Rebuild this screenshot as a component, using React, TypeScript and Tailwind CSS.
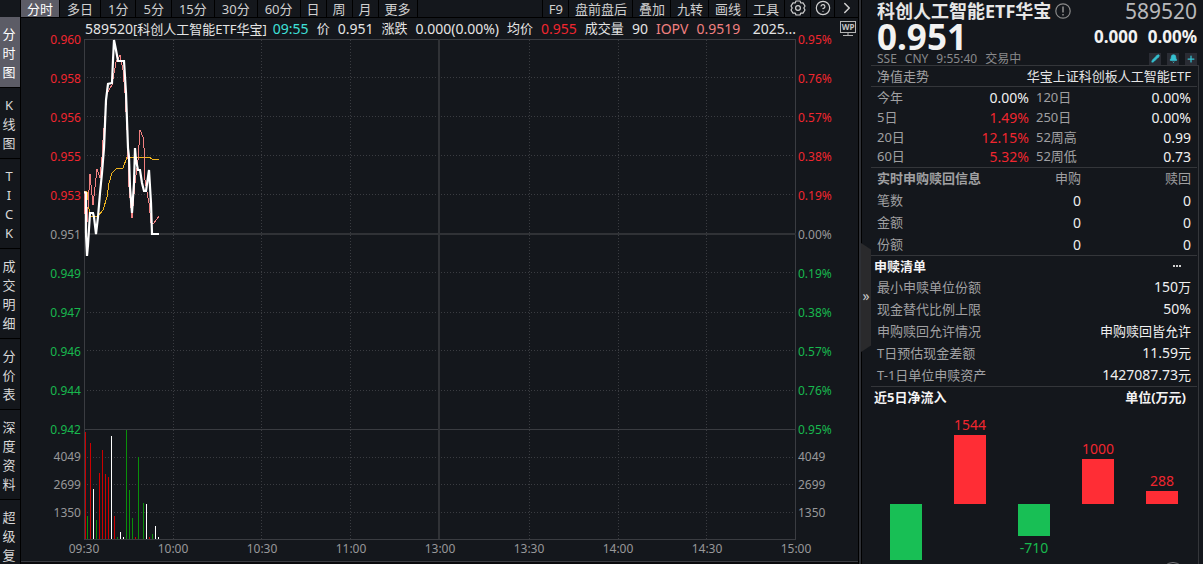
import { Bell, ChevronRight, CircleHelp, Pencil, Plus } from "lucide-react";

const SIDE_TABS = ["分时图", "K线图", "TICK", "成交明细", "分价表", "深度资料", "超级复盘"];

const PERIODS = ["分时", "多日", "1分", "5分", "15分", "30分", "60分", "日", "周", "月", "更多"];
const TOOLS = ["F9", "盘前盘后", "叠加", "九转", "画线", "工具"];

const PRICES = ["0.960", "0.958", "0.956", "0.955", "0.953", "0.951", "0.949", "0.947", "0.946", "0.944", "0.942"];
const PERCENTS = ["0.95%", "0.76%", "0.57%", "0.38%", "0.19%", "0.00%", "0.19%", "0.38%", "0.57%", "0.76%", "0.95%"];
const VOLUMES = ["4049", "2699", "1350"];
const TIMES = ["09:30", "10:00", "10:30", "11:00", "13:00", "13:30", "14:00", "14:30", "15:00"];

const QUOTE = [
  { text: "09:55", cls: "text-[14px] text-[#3fe0d8]" },
  { text: "价", cls: "text-[13px]" },
  { text: "0.951", cls: "text-[14px]" },
  { text: "涨跌", cls: "text-[13px]" },
  { text: "0.000(0.00%)", cls: "text-[14px]" },
  { text: "均价", cls: "text-[13px]" },
  { text: "0.955", cls: "text-[14px] text-[#f0262f]" },
  { text: "成交量", cls: "text-[13px]" },
  { text: "90", cls: "text-[14px]" },
  { text: "IOPV", cls: "text-[14px] text-[#f08080]" },
  { text: "0.9519", cls: "text-[14px] text-[#f08080]" },
];

const RED = "#cc0000";
const GREEN = "#0a8f0a";
const WHITE = "#ffffff";

// x, top, colour
const VOLUME_BARS: [number, number, string][] = [
  [1, 393, RED], [3, 477, GREEN], [6, 404, RED], [9, 450, WHITE], [12, 481, GREEN],
  [15, 434, RED], [18, 411, RED], [21, 435, RED], [24, 438, RED], [27, 397, WHITE],
  [30, 477, RED], [33, 498, GREEN], [36, 493, WHITE], [39, 498, WHITE], [42, 391, GREEN],
  [45, 451, GREEN], [48, 479, GREEN], [51, 498, RED], [54, 418, GREEN], [59, 464, GREEN],
  [62, 465, WHITE], [65, 498, RED], [68, 495, GREEN], [71, 487, WHITE], [74, 498, WHITE],
];

const PRICE_LINE =
  "0,153 2,154 2,195 3,217 4,206 6,174 9,174 10,178 12,195 14,178 16,154 18,134 20,109 22,61 24,45 28,44 29,21 30,1 32,11 34,22 40,22 42,54 44,109 45,118 46,148 48,174 50,144 51,109 52,121 54,131 56,131 58,144 60,152 62,152 65,131 67,164 68,195 75,195";
const IOPV_LINE =
  "0,152 2,198 4,168 6,135 9,166 13,130 16,139 18,118 19,101 23,54 28,46 32,23 36,16 39,31 41,54 43,91 45,148 48,179 51,144 54,121 56,91 59,98 60,109 61,141 63,153 65,164 67,184 70,184 75,177";
const AVG_LINE =
  "0,152 3,153 6,178 14,177 19,171 23,158 25,144 28,134 33,129 39,129 43,118 65,118 68,120 75,120";

const RETURNS = [
  { a: "今年", av: "0.00%", up: false, b: "120日", bv: "0.00%" },
  { a: "5日", av: "1.49%", up: true, b: "250日", bv: "0.00%" },
  { a: "20日", av: "12.15%", up: true, b: "52周高", bv: "0.99" },
  { a: "60日", av: "5.32%", up: true, b: "52周低", bv: "0.73" },
];

const LIST = [
  { k: "最小申赎单位份额", n: "150", unit: "万" },
  { k: "现金替代比例上限", n: "50%", unit: "" },
  { k: "申购赎回允许情况", n: "", unit: "申购赎回皆允许" },
  { k: "T日预估现金差额", n: "11.59", unit: "元" },
  { k: "T-1日单位申赎资产", n: "1427087.73", unit: "元" },
];

const FLOWS = [
  { value: -1250, label: "" },
  { value: 1544, label: "1544" },
  { value: -710, label: "-710" },
  { value: 1000, label: "1000" },
  { value: 288, label: "288" },
];

function axisColor(i: number) {
  if (i === 5) return "text-[#98989a]";
  return i < 5 ? "text-[#f0262f]" : "text-[#18b84e]";
}

function GearIcon() {
  return (
    <svg width="16" height="16" viewBox="0 0 16 16" fill="none" stroke="currentColor" strokeWidth="1.2" strokeLinejoin="round">
      <path d="M6 1 H10 L10.8 3 L13 2.9 L15 6 L13.8 8 L15 10 L13 13.1 L10.8 13 L10 15 H6 L5.2 13 L3 13.1 L1 10 L2.2 8 L1 6 L3 2.9 L5.2 3 Z" />
      <circle cx="8" cy="8" r="2.4" />
    </svg>
  );
}

function InfoIcon() {
  return (
    <svg width="16" height="16" viewBox="0 0 16 16" fill="none" stroke="#8a8a8a" strokeWidth="1.2">
      <circle cx="8" cy="8" r="7.2" />
      <path d="M8 3.5 V9.5 M8 11 V12.5" strokeWidth="1.6" />
    </svg>
  );
}

function WpIcon() {
  return (
    <svg width="16" height="16" viewBox="0 0 16 16" fill="none" stroke="#b4b4b4">
      <rect x="0.5" y="0.5" width="15" height="11" />
      <text x="8" y="9" textAnchor="middle" fontSize="8" fontWeight="700" fill="#c4c4c4" stroke="none">WP</text>
      <path d="M8 11.5 V14 M3 14.5 H13" />
    </svg>
  );
}

function Plot() {
  return (
    <svg className="block h-[501px] w-full" viewBox="0 0 712 501" preserveAspectRatio="none" fill="none" shapeRendering="crispEdges">
      <g stroke="#3a3c41" strokeDasharray="1 2">
        {[38, 77, 116, 155, 233, 273, 311, 351, 418, 445, 473].map((y) => (
          <line key={y} x1="3" x2="710" y1={y + 0.5} y2={y + 0.5} />
        ))}
        {[89, 177, 266, 445, 534, 622].map((x) => (
          <line key={x} x1={x + 0.5} x2={x + 0.5} y1="1" y2="500" />
        ))}
      </g>
      <g stroke="#3a3c41">
        <rect x="0.5" y="0.5" width="711" height="500" />
        <line x1="0" x2="712" y1="390.5" y2="390.5" />
      </g>
      <g stroke="#303236" strokeWidth="2">
        <line x1="0" x2="712" y1="195" y2="195" />
        <line x1="355" x2="355" y1="0" y2="500" />
      </g>
      {VOLUME_BARS.map(([x, top, color]) => (
        <line key={x} x1={x + 0.5} x2={x + 0.5} y1={top} y2="500" stroke={color} />
      ))}
      <polyline points={AVG_LINE} stroke="#f0b41e" />
      <polyline points={IOPV_LINE} stroke="#f08080" />
      <polyline points={PRICE_LINE} stroke="#ffffff" strokeWidth="2.2" shapeRendering="auto" />
    </svg>
  );
}

function Axis({ labels, side }: { labels: string[]; side: "left" | "right" }) {
  return (
    <div className={`shrink-0 pt-[2px] text-[12px] ${side === "left" ? "w-[63px] pr-[3px] text-right" : "w-[62px] pl-[2px]"}`}>
      {labels.map((l, i) => (
        <div key={i} className={`h-[39px] leading-[39px] ${axisColor(i)}`}>{l}</div>
      ))}
      <div className="-mt-[6px] text-[#98989a]">
        {VOLUMES.map((v) => <div key={v} className="h-7 leading-7">{v}</div>)}
      </div>
    </div>
  );
}

function ChartPanel() {
  return (
    <main className="flex min-w-0 flex-1 flex-col">
      <nav className="flex h-[18px] shrink-0 justify-between border-b border-black text-[13px] leading-[16px] text-[#d0d0d0]">
        <div className="flex">
          {PERIODS.map((p, i) => (
            <button key={p} className={`border-r border-black ${/\d/.test(p) ? "px-[7px]" : "px-[6px]"} ${i === 0 ? "bg-[#5c5c66] text-white" : ""} ${i === 1 ? "px-[7px]" : ""}`}>{p}</button>
          ))}
        </div>
        <div className="flex">
          {TOOLS.map((t, i) => (
            <button key={t} className={`border-r border-black pl-[6px] pr-[5px] ${i === 0 ? "border-l" : ""}`}>{t}</button>
          ))}
          <button aria-label="设置" className="flex w-[26px] items-center justify-center border-r border-black pb-[2px]"><GearIcon /></button>
          <button aria-label="帮助" className="flex w-6 items-center justify-center border-r border-black pb-[2px]"><CircleHelp size={16} strokeWidth={1.8} /></button>
          <button aria-label="更多工具" className="flex w-[23px] items-center justify-center pb-[2px]"><ChevronRight size={18} /></button>
        </div>
      </nav>

      <div className="relative flex flex-1">
        <Axis labels={PRICES} side="left" />
        <div className="min-w-0 flex-1">
          <div className="flex h-[21px] items-center gap-2 whitespace-nowrap pl-px leading-[21px] text-[#e4e4e4]">
            <span className="-mr-[2px] text-[13px]"><span className="text-[14px]">589520</span>[科创人工智能ETF华宝]</span>
            {QUOTE.map((q) => <span key={q.text} className={q.cls}>{q.text}</span>)}
            <span className="min-w-0 flex-1 text-right text-[14px]">2025...</span>
          </div>
          <Plot />
          <div className="-mx-4 flex justify-between text-[12px] leading-[18px] text-[#98989a]">
            {TIMES.map((t) => <span key={t} className="w-8 text-center">{t}</span>)}
          </div>
        </div>
        <Axis labels={PERCENTS} side="right" />
        <button aria-label="WP" className="absolute right-[2px] top-[3px]"><WpIcon /></button>
      </div>
      <div className="h-[3px] shrink-0 border-t border-[#3a3c41] bg-[#0a0b0d]" />
    </main>
  );
}

function FlowChart() {
  return (
    <div className="flex px-[3px] text-[14px] leading-[20px]">
      {FLOWS.map((f, i) => {
        const h = Math.round(Math.abs(f.value) * 0.045);
        return (
          <div key={i} className="flex flex-1 flex-col items-center">
            <div className="flex h-[97px] flex-col items-center justify-end text-[#f0262f]">
              {f.value > 0 && <span>{f.label}</span>}
              {f.value > 0 && <div className="w-8 bg-[#ff2d35]" style={{ height: h }} />}
            </div>
            <div className="flex h-14 flex-col items-center gap-[2px] overflow-hidden text-[#18b84e]">
              {f.value < 0 && <div className="w-8 shrink-0 bg-[#18bf55]" style={{ height: h }} />}
              {f.value < 0 && <span>{f.label}</span>}
            </div>
          </div>
        );
      })}
    </div>
  );
}

function QuotePanel() {
  return (
    <aside className="relative w-[345px] shrink-0 border-l border-black pl-[12px] pr-[6px] text-[13px] text-[#a0a0a2] shadow-[inset_2px_0_0_#2e3035,inset_3px_0_0_#000]">
      <header className="pl-[6px]">
        <div className="flex h-[22px] items-center justify-between">
          <h1 className="flex items-center gap-1 text-[18px] font-bold leading-[22px] text-[#e6e6e6]">
            科创人工智能ETF华宝
            <InfoIcon />
          </h1>
          <span className="text-[21px] leading-[22px] text-[#b8b8ba]">589520</span>
        </div>
        <div className="flex h-[30px] items-center justify-between font-bold text-[#f2f2f2]">
          <span className="text-[35px] leading-[30px]">0.951</span>
          <span className="flex gap-[10px] text-[17px] leading-[30px]"><span>0.000</span><span>0.00%</span></span>
        </div>
        <div className="flex h-[13px] items-center justify-between text-[12px] leading-[13px] text-[#8a8a8c]">
          <div className="flex gap-2"><span>SSE</span><span>CNY</span><span>9:55:40</span><span>交易中</span></div>
          <div className="flex gap-[6px] text-[#35c0d0]">
            <button aria-label="编辑" className="flex size-3 items-center justify-center bg-[#2a2c34]"><Pencil size={9} fill="currentColor" /></button>
            <button aria-label="提醒" className="flex size-3 items-center justify-center bg-[#2a2c34]"><Bell size={9} fill="currentColor" /></button>
            <button aria-label="添加" className="flex size-3 items-center justify-center bg-[#2a2c34]"><Plus size={10} strokeWidth={3} /></button>
          </div>
        </div>
      </header>

      <div className="-mr-[2px] border-r border-t border-[#34363a] pr-px">
        <div className="flex h-[21px] justify-between border-b border-[#34363a] px-[6px] leading-[20px]">
          <span>净值走势</span>
          <span className="text-[#e6e6e6]">华宝上证科创板人工智能ETF</span>
        </div>

        <table className="w-full border-b border-[#34363a] leading-[19px]">
          <tbody>
            {RETURNS.map((r) => (
              <tr key={r.a} className="h-5">
                <th className="p-0 pl-[6px] text-left font-normal">{r.a}</th>
                <td className={`p-0 text-right text-[14px] ${r.up ? "text-[#f0262f]" : "text-[#f0f0f0]"}`}>{r.av}</td>
                <th className="w-[90px] p-0 pl-[7px] text-left font-normal">{r.b}</th>
                <td className="w-[78px] p-0 pr-[6px] text-right text-[14px] text-[#f0f0f0]">{r.bv}</td>
              </tr>
            ))}
          </tbody>
        </table>

        <table className="w-full border-b border-[#34363a] leading-[21px]">
          <thead>
            <tr className="h-[22px]">
              <th className="p-0 pl-[6px] text-left font-bold">实时申购赎回信息</th>
              <th className="p-0 text-right font-normal">申购</th>
              <th className="w-[116px] p-0 pr-[6px] text-right font-normal">赎回</th>
            </tr>
          </thead>
          <tbody>
            {["笔数", "金额", "份额"].map((k) => (
              <tr key={k} className="h-[22px]">
                <th className="p-0 pl-[6px] text-left font-normal">{k}</th>
                <td className="p-0 text-right text-[14px] text-[#f0f0f0]">0</td>
                <td className="p-0 pr-[6px] text-right text-[14px] text-[#f0f0f0]">0</td>
              </tr>
            ))}
          </tbody>
        </table>

        <div className="flex h-5 justify-between pl-[3px] pr-4 leading-[20px] text-[#f4f4f4]">
          <h2 className="font-bold">申赎清单</h2>
          <button aria-label="更多" className="flex items-center gap-px">
            <i className="size-[2px] bg-[#d0d0d0]" /><i className="size-[2px] bg-[#d0d0d0]" /><i className="size-[2px] bg-[#d0d0d0]" />
          </button>
        </div>
        <table className="w-full border-b border-[#34363a] leading-[21px]">
          <tbody>
            {LIST.map((r) => (
              <tr key={r.k} className="h-[22px]">
                <th className="p-0 pl-[6px] text-left font-normal">{r.k}</th>
                <td className="p-0 pr-[6px] text-right text-[#f0f0f0]"><span className="text-[14px]">{r.n}</span>{r.unit}</td>
              </tr>
            ))}
          </tbody>
        </table>

        <div className="flex h-5 justify-between pl-[3px] pr-[11px] font-bold leading-[20px] text-[#f4f4f4]">
          <h2>近5日净流入</h2>
          <span>单位(万元)</span>
        </div>
        <FlowChart />
        <div className="h-1" />
      </div>

      <button aria-label="收起" className="absolute left-[2px] top-[243px] flex h-[109px] w-[10px] items-center justify-center bg-[#2a2a2c] pb-1 text-[14px] text-[#c8c8c8] [clip-path:polygon(0_0,100%_6%,100%_94%,0_100%)]">»</button>
      <div className="absolute right-[18px] top-[562px] size-6 rounded-full border border-[#77777a]" />
    </aside>
  );
}

export default function App() {
  return (
    <div className="flex h-screen overflow-hidden bg-[#14171c] font-['Noto_Sans','Noto_Sans_CJK_SC',sans-serif]">
      <nav className="w-[21px] shrink-0 overflow-hidden border-r border-black pt-[17px] text-[13px] leading-[19px] text-[#d8d8d8]">
        {SIDE_TABS.map((t, i) => (
          <button key={t} className={`flex w-full flex-col items-center border-b border-black pb-[5px] pr-[2px] pt-2 ${i === 0 ? "bg-[#5c5c66] text-white" : ""}`}>
            {t.split("").map((c, j) => <span key={j}>{c}</span>)}
          </button>
        ))}
      </nav>
      <ChartPanel />
      <QuotePanel />
    </div>
  );
}
